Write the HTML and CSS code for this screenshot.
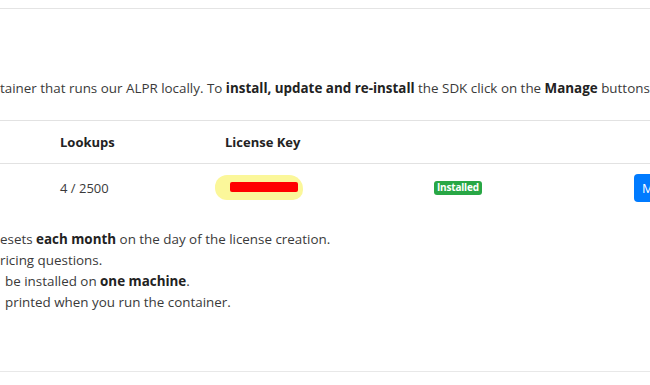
FILE: index.html
```html
<!DOCTYPE html>
<html>
<head>
<meta charset="utf-8">
<link rel="stylesheet" href="styles.css">
</head>
<body>
<div class="card">
  <p class="intro">tainer that runs our ALPR locally. To <b>install, update and re-install</b> the SDK click on the <b>Manage</b> buttons.</p>
  <div class="table">
    <div class="row head">
      <div class="cell">Lookups</div>
      <div class="cell">License Key</div>
      <div class="cell"></div>
      <div class="cell"></div>
    </div>
    <div class="row body">
      <div class="cell">4 / 2500</div>
      <div class="cell"><span class="redact"><span class="red"></span></span></div>
      <div class="cell"><span class="badge">Installed</span></div>
      <div class="cell"><button class="btn">Manage</button></div>
    </div>
  </div>
  <ul class="notes">
    <li>esets <b>each month</b> on the day of the license creation.</li>
    <li>ricing questions.</li>
    <li class="ind">be installed on <b>one machine</b>.</li>
    <li class="ind">printed when you run the container.</li>
  </ul>
</div>
</body>
</html>
```

FILE: styles.css
```css
html, body {
  margin: 0;
  padding: 0;
  background: #ffffff;
  overflow: hidden;
}
body {
  width: 650px;
  height: 385px;
  font-family: "Open Sans", "Noto Sans", sans-serif;
  font-size: 13.4px;
  color: #3a3a3a;
}
.card {
  margin-top: 8px;
  border-top: 1px solid #e4e4e4;
  border-bottom: 1px solid #e8e8e8;
  height: 364px;
  box-sizing: border-box;
  display: flex;
  flex-direction: column;
  white-space: nowrap;
}
.intro {
  margin: 69px 0 0 0;
  line-height: 20px;
}
.intro b { color: #222; }
.table {
  margin-top: 22px;
  border-top: 1px solid #e2e2e2;
}
.row {
  display: grid;
  grid-template-columns: 165px 209px 200px 1fr;
  padding-left: 60px;
  align-items: center;
}
.head {
  height: 42px;
  border-bottom: 1px solid #e2e2e2;
  font-weight: 700;
  color: #222;
  font-size: 13px;
}
.body {
  height: 47px;
  font-size: 13px;
}
.redact {
  display: inline-block;
  width: 88px;
  height: 25px;
  margin-left: -10px;
  border-radius: 12px 14px 10px 12px;
  background: #fbf79a;
  position: relative;
  vertical-align: middle;
}
.red {
  position: absolute;
  left: 15px;
  top: 7px;
  width: 68px;
  height: 10px;
  background: #ff0000;
  border-radius: 2px;
}
.badge {
  display: inline-block;
  background: #28a745;
  color: #fff;
  font-size: 10px;
  font-weight: 700;
  padding: 1px 3px 2px;
  border-radius: 3px;
  line-height: 11px;
  letter-spacing: -0.2px;
  position: relative;
  top: -2px;
}
.btn {
  font-family: inherit;
  font-size: 13px;
  color: #fff;
  background: #007bff;
  border: none;
  border-radius: 4px;
  height: 28px;
  padding: 0 8px;
}
.notes {
  list-style: none;
  margin: 18px 0 0 0;
  padding: 0;
  line-height: 21px;
}
.notes b { color: #222; }
.ind { padding-left: 5px; }
```
